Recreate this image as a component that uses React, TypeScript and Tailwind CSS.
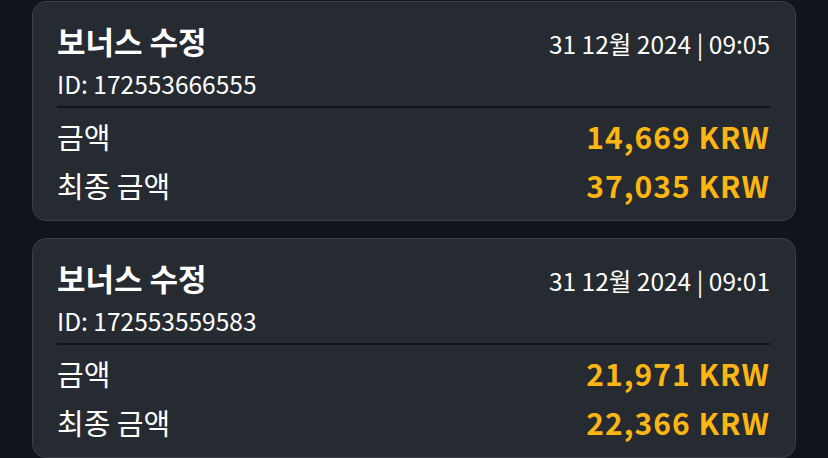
const items = [
  { id: "172553666555", date: "31 12월 2024 | 09:05", amount: "14,669 KRW", total: "37,035 KRW" },
  { id: "172553559583", date: "31 12월 2024 | 09:01", amount: "21,971 KRW", total: "22,366 KRW" },
];

function BonusCard({ item }: { item: (typeof items)[number] }) {
  return (
    <div className="rounded-[14px] border border-[#3b3e44] bg-[#262a31] pl-6 pr-[25px] pt-[21px] pb-[18px]">
      <div className="flex items-baseline justify-between">
        <span className="text-[31px] font-bold leading-[36px] text-white">보너스 수정</span>
        <span className="text-[24.5px] leading-[30px] text-white">{item.date}</span>
      </div>
      <div className="mt-[10px] text-[24.5px] leading-[30px] text-white">ID: {item.id}</div>
      <div className="mt-[7px] h-[2px] bg-[#11151b]" />
      <div className="mt-[11px] flex items-center justify-between">
        <span className="text-[29px] leading-[34px] text-white">금액</span>
        <span className="text-[30px] font-bold leading-[34px] tracking-[1px] text-[#fbb613]">{item.amount}</span>
      </div>
      <div className="mt-[15px] flex items-center justify-between">
        <span className="text-[29px] leading-[34px] text-white">최종 금액</span>
        <span className="text-[30px] font-bold leading-[34px] tracking-[1px] text-[#fbb613]">{item.total}</span>
      </div>
    </div>
  );
}

export default function App() {
  return (
    <div
      className="h-[458px] overflow-hidden bg-[#10151b] px-[32px] pt-[1px]"
      style={{ fontFamily: '"Noto Sans CJK KR", "Noto Sans", sans-serif' }}
    >
      <div className="flex w-[764px] flex-col gap-[17px]">
        {items.map((item) => (
          <BonusCard key={item.id} item={item} />
        ))}
      </div>
    </div>
  );
}
